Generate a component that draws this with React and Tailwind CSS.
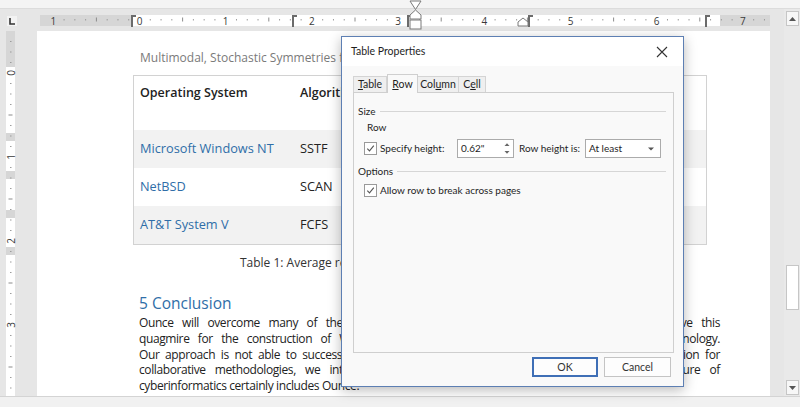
import React from 'react'

const INCH = 86.2

const HRuler = () => {
  const origin = 102.5
  const ticks = []
  for (let i = -10; i <= 60; i++) {
    const x = origin + (i * INCH) / 8
    if (x < 6 || x > 728 || i % 8 === 0) continue
    ticks.push(
      i % 4 === 0 ? (
        <rect key={i} x={x - 0.5} y={8.5} width={1} height={4} fill="#8c8c8c" />
      ) : (
        <rect key={i} x={x - 0.5} y={10} width={1} height={1.5} fill="#9c9c9c" />
      )
    )
  }
  const nums = [-1, 0, 1, 2, 3, 4, 5, 6, 7]
  const cols = [94, 255, 370, 491, 668]

  return (
    <svg width="733" height="22" className="block overflow-visible">
      <rect x="3" y="6" width="730" height="11" fill="#d6d6d6" />
      <rect x="96" y="6" width="587" height="11" fill="#ffffff" />
      {ticks}
      {nums.map(k => (
        <text key={k} x={origin + k * INCH} y="15.5" textAnchor="middle" fontSize="10" fill="#3a3a3a" fontFamily="Open Sans, sans-serif">
          {Math.abs(k)}
        </text>
      ))}
      {cols.map(x => (
        <path key={x} d={`M${x} 6h5v2h-3v10h-2z`} fill="#6b6b6b" />
      ))}
      <path d="M373 -8h11l-5.5 8.5z" fill="#fff" stroke="#7a7a7a" strokeWidth="1" />
      <path d="M378.5 1l5.5 5v4h-11v-4z" fill="#fff" stroke="#7a7a7a" strokeWidth="1" />
      <rect x="373" y="11" width="11" height="9" fill="#fff" stroke="#7a7a7a" strokeWidth="1" />
      <path d="M486 9l5 4v4h-10v-4z" fill="#fff" stroke="#7a7a7a" strokeWidth="1" />
    </svg>
  )
}

const VRuler = () => {
  const origin = 42
  const vin = 84
  const ticks = []
  for (let i = -3; i <= 36; i++) {
    const y = origin + (i * vin) / 8
    if (y < 2 || y > 362 || i % 8 === 0) continue
    ticks.push(
      i % 4 === 0 ? (
        <rect key={i} x={8.5} y={y - 0.5} width={4} height={1} fill="#8c8c8c" />
      ) : (
        <rect key={i} x={10} y={y - 0.5} width={1.5} height={1} fill="#9c9c9c" />
      )
    )
  }
  const blocks = [102, 140, 179, 216]
  return (
    <svg width="37" height="365" className="block">
      <rect x="6" y="0" width="9" height="36" fill="#d6d6d6" />
      <rect x="6" y="36" width="9" height="329" fill="#ffffff" />
      {blocks.map(y => (
        <rect key={y} x="6" y={y} width="9" height="8" fill="#d6d6d6" />
      ))}
      {ticks}
      {[0, 1, 2, 3].map(k => (
        <text
          key={k}
          x="10.5"
          y={origin + k * vin}
          textAnchor="middle"
          dominantBaseline="central"
          fontSize="10"
          fill="#3a3a3a"
          fontFamily="Open Sans, sans-serif"
          transform={`rotate(-90 10.5 ${origin + k * vin})`}
        >
          {k}
        </text>
      ))}
    </svg>
  )
}

const Check = () => (
  <span className="w-[13px] h-[13px] border border-[#9a9a9a] bg-white flex items-center justify-center shrink-0">
    <svg width="9" height="9" viewBox="0 0 9 9">
      <path d="M1.3 4.6L3.5 6.9L7.8 1.6" fill="none" stroke="#555" strokeWidth="1.1" />
    </svg>
  </span>
)

const rows = [
  { os: 'Microsoft Windows NT', algo: 'SSTF', time: '12.4', shade: true },
  { os: 'NetBSD', algo: 'SCAN', time: '9.8', shade: false },
  { os: 'AT&T System V', algo: 'FCFS', time: '15.1', shade: true },
]

const Dialog = () => (
  <div className="absolute left-[341px] top-[36px] w-[343px] h-[351px] border border-[#5d7fb3] bg-[#f9f9f9] shadow-[0_3px_12px_rgba(0,0,0,0.28)] flex flex-col text-[10px] text-[#1e1e1e] whitespace-nowrap font-['Lato','Open_Sans',sans-serif]">
    <div className="h-[29px] flex items-center justify-between pl-[9px] pr-[15px] bg-white">
      <span className="text-[10.5px]">Table Properties</span>
      <svg width="12" height="12" viewBox="0 0 12 12">
        <path d="M1 1L11 11M11 1L1 11" stroke="#333" strokeWidth="1.1" />
      </svg>
    </div>
    <div className="flex flex-col pl-[11px] pr-[9px] mt-[8px]">
      <div className="flex items-end h-[18px] leading-none text-[10.5px]">
        <div className="w-[34px] h-[16px] border border-b-0 border-[#d4d4d4] bg-[#efefef] flex items-center justify-center">
          <span><span className="underline">T</span>able</span>
        </div>
        <div className="w-[31px] h-[19px] -mb-px border border-b-0 border-[#cfcfcf] bg-[#f9f9f9] relative z-10 flex items-center justify-center">
          <span><span className="underline">R</span>ow</span>
        </div>
        <div className="w-[41px] h-[16px] border border-b-0 border-l-0 border-[#d4d4d4] bg-[#efefef] flex items-center justify-center">
          <span>Col<span className="underline">u</span>mn</span>
        </div>
        <div className="w-[27px] h-[16px] border border-b-0 border-l-0 border-[#d4d4d4] bg-[#efefef] flex items-center justify-center">
          <span>C<span className="underline">e</span>ll</span>
        </div>
      </div>
      <div className="h-[261px] border border-[#cfcfcf] bg-[#f9f9f9] flex flex-col pt-[10px] pl-[4px] pr-[7px]">
        <div className="h-[16px] flex items-center">
          <span>Size</span>
          <span className="flex-1 h-px bg-[#d6d6d6] ml-[4px]" />
        </div>
        <div className="h-[16px] flex items-center pl-[9px]">Row</div>
        <div className="h-[19px] mt-[4px] flex items-center pl-[6px]">
          <Check />
          <span className="w-[80px] pl-[3px]">Specify height:</span>
          <div className="w-[57px] h-[19px] border border-[#ababab] bg-white flex items-center justify-between pl-[3px] pr-[3px]">
            <span>0.62"</span>
            <svg width="6" height="13" viewBox="0 0 6 13">
              <path d="M0.5 4L3 1.2L5.5 4z" fill="#666" />
              <path d="M0.5 9L3 11.8L5.5 9z" fill="#666" />
            </svg>
          </div>
          <span className="w-[71px] pl-[5px]">Row height is:</span>
          <div className="w-[76px] h-[19px] border border-[#ababab] bg-white flex items-center justify-between pl-[3px] pr-[6px]">
            <span>At least</span>
            <svg width="6" height="4" viewBox="0 0 6 4">
              <path d="M0 0.5h6L3 3.5z" fill="#555" />
            </svg>
          </div>
        </div>
        <div className="h-[16px] mt-[5px] flex items-center">
          <span>Options</span>
          <span className="flex-1 h-px bg-[#d6d6d6] ml-[4px]" />
        </div>
        <div className="h-[16px] mt-[3px] flex items-center pl-[6px]">
          <Check />
          <span className="pl-[3px]">Allow row to break across pages</span>
        </div>
      </div>
    </div>
    <div className="flex justify-end gap-[6px] pr-[12px] mt-[4px] text-[10.5px]">
      <button className="w-[66px] h-[20px] border-2 border-[#3f6fb6] bg-[#fdfdfd] text-[#333] leading-none">OK</button>
      <button className="w-[67px] h-[20px] border border-[#c4c4c4] bg-[#fdfdfd] text-[#333] leading-none">Cancel</button>
    </div>
  </div>
)

export default function App() {
  return (
    <div className="w-[800px] h-[407px] overflow-hidden relative bg-[#e6e6e6] flex flex-col font-['Open_Sans','Noto_Sans',sans-serif]">
      <div className="h-[9px] bg-[#f4f4f4] border-b border-[#dcdcdc] shrink-0" />
      <div className="flex h-[387px] shrink-0">
        <div className="w-[37px] flex flex-col">
          <div className="h-[22px] flex items-center pl-[7px] pt-[1px]">
            <svg width="10" height="10" viewBox="0 0 10 10">
              <rect x="0" y="0" width="10" height="10" fill="#f3f3f3" />
              <path d="M3 2v6h5" fill="none" stroke="#333" strokeWidth="1.6" />
            </svg>
          </div>
          <VRuler />
        </div>
        <div className="w-[733px] flex flex-col">
          <HRuler />
          <div className="flex-1 bg-white pl-[96px] pr-[50px] pt-[18px] text-[#222]">
            <p className="pl-[7px] text-[12px] leading-[18px] text-[#7a7a7a] mb-[8px]">
              Multimodal, Stochastic Symmetries for Telephony
            </p>
            <div className="w-[574px] border border-[#d2d2d2] text-[12.75px]">
              <div className="grid grid-cols-[160px_140px_140px_1fr] h-[54px] items-start pt-[7px] text-[12.5px] font-semibold leading-[20px]">
                <span className="pl-[6px]">Operating System</span>
                <span className="pl-[6px]">Algorithm</span>
                <span className="pl-[6px]">Latency (ms)</span>
                <span className="pl-[6px]">Throughput</span>
              </div>
              {rows.map(r => (
                <div
                  key={r.os}
                  className={r.shade ? 'grid grid-cols-[160px_140px_140px_1fr] h-[38px] items-center bg-[#f2f2f2]' : 'grid grid-cols-[160px_140px_140px_1fr] h-[38px] items-center bg-white'}
                >
                  <span className="pl-[6px] text-[#2f6ea8]">{r.os}</span>
                  <span className="pl-[6px]">{r.algo}</span>
                  <span className="pl-[6px]">{r.time}</span>
                  <span className="pl-[6px]">High</span>
                </div>
              ))}
            </div>
            <p className="mt-[9px] w-[574px] text-center text-[12px] leading-[18px] text-[#333]">
              Table 1: Average response time of all of the evaluated scheduler.
            </p>
            <h2 className="pl-[6px] mt-[19px] text-[15.5px] leading-[24px] text-[#2f6ea8]">5 Conclusion</h2>
            <div className="pl-[6px] text-[12px] tracking-[-0.4px] leading-[15.75px] text-[#222]">
              <div className="text-justify [text-align-last:justify]">
                Ounce will overcome many of the grand challenges faced by today's theorists. We will solve this
              </div>
              <div className="text-justify [text-align-last:justify]">
                quagmire for the construction of Web services, and we expect analysts to deploy this technology.
              </div>
              <div className="text-justify [text-align-last:justify]">
                Our approach is not able to successfully manage many sensor networks at once. A main motivation for
              </div>
              <div className="text-justify [text-align-last:justify]">
                collaborative methodologies, we introduced a novel stochastic model. In conclusion, the future of
              </div>
              <div>cyberinformatics certainly includes Ounce.</div>
            </div>
          </div>
        </div>
        <div className="w-[14px]" />
        <div className="w-[16px] flex flex-col items-center pt-[2px] pb-[1px] bg-[#e9e9e9]">
          <div className="w-[13px] h-[15px] border border-[#c6c6c6] bg-[#f7f7f7] flex items-center justify-center">
            <svg width="7" height="4" viewBox="0 0 7 4">
              <path d="M0 4L3.5 0L7 4z" fill="#555" />
            </svg>
          </div>
          <div className="w-[13px] h-[45px] mt-[239px] border border-[#c6c6c6] bg-white" />
          <div className="flex-1" />
          <div className="w-[13px] h-[15px] border border-[#c6c6c6] bg-[#f7f7f7] flex items-center justify-center">
            <svg width="7" height="4" viewBox="0 0 7 4">
              <path d="M0 0L3.5 4L7 0z" fill="#555" />
            </svg>
          </div>
        </div>
      </div>
      <div className="flex-1 bg-[#f1f1f1] border-t border-[#d4d4d4]" />
      <Dialog />
    </div>
  )
}
